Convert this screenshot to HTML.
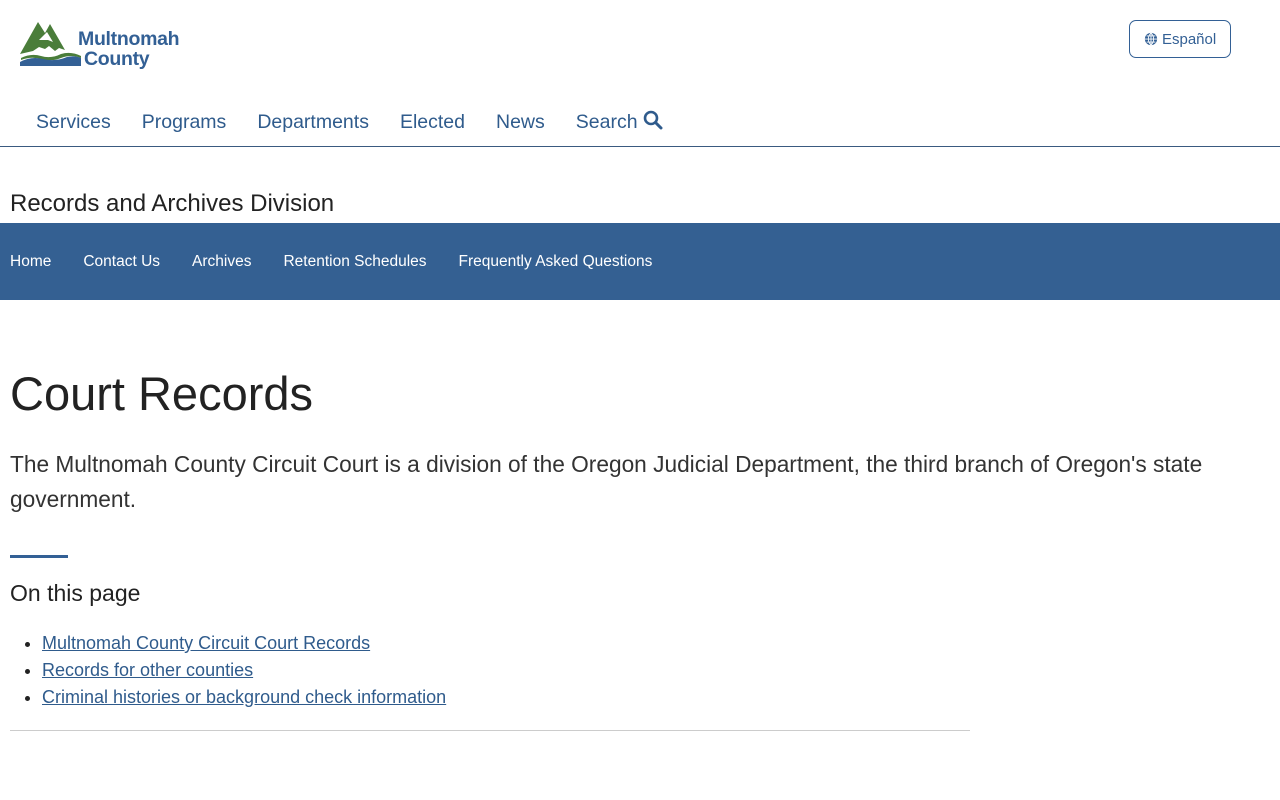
<!DOCTYPE html>
<html><head><meta charset="utf-8"><style>
body{margin:0;font-family:"Liberation Sans",sans-serif;color:#222;background:#fff;width:1280px;height:800px;overflow:hidden;position:relative}
.abs{position:absolute}
.nav a{color:#2f5b8c;text-decoration:none;font-size:19.5px;margin-right:31px}
.sub a{color:#fff;text-decoration:none;font-size:15.5px;margin-right:32px}
ul a{color:#2f5b8c;text-decoration:underline}
</style></head><body>
<svg class="abs" style="left:19px;top:18px" width="64" height="50" viewBox="0 0 64 50">
<path d="M1 36 L19 4 L26 15 L31 6 L46 32 L40 30 L36 33 L30 28 L26 31 L20 29 L14 33 Z" fill="#4a7d3a"/>
<path d="M20 22 L28 14 L34 24 L29 22 Z" fill="#fff"/>
<path d="M2 40 Q12 35 22 38 Q32 41 42 36 Q52 33 62 38 L62 40 Q52 36 42 40 Q32 44 22 41 Q12 38 2 42 Z" fill="#4a7d3a"/>
<path d="M1 44 Q12 38 24 41 Q36 44 48 39 Q56 37 62 40 L62 48 L1 48 Z" fill="#336095"/>
</svg>
<div class="abs" style="left:78px;top:29px;color:#336095;font-weight:bold;font-size:19.5px;line-height:20px;letter-spacing:-0.3px">Multnomah<br><span style="margin-left:6px">County</span></div>
<div class="abs" style="left:1129px;top:20px;width:100px;height:36px;border:1px solid #336095;border-radius:7px;font-size:15px;color:#336095;line-height:38px;text-align:center">
<svg width="14" height="14" viewBox="0 0 16 16" style="vertical-align:-2px"><circle cx="8" cy="8" r="7" fill="#336095"/><path d="M1 8h14M8 1v14M3 4.5h10M3 11.5h10M8 1c-4 4-4 10 0 14M8 1c4 4 4 10 0 14" stroke="#fff" stroke-width="1" fill="none"/></svg> Español</div>
<div class="abs nav" style="left:36px;top:110px">
<a>Services</a><a>Programs</a><a>Departments</a><a>Elected</a><a>News</a><a>Search <svg width="20" height="20" viewBox="0 0 20 20" style="vertical-align:-2px"><circle cx="8" cy="8" r="6" stroke="#2f5b8c" stroke-width="2.6" fill="none"/><path d="M12.5 12.5l5.5 5.5" stroke="#2f5b8c" stroke-width="3" stroke-linecap="round"/></svg></a></div>
<div class="abs" style="left:0;top:146px;width:1280px;height:1px;background:#3a5a80"></div>
<div class="abs" style="left:10px;top:190px;font-size:24px">Records and Archives Division</div>
<div class="abs sub" style="left:0;top:223px;width:1280px;height:77px;background:#346092;box-sizing:border-box;padding:30px 10px 0">
<a>Home</a><a>Contact Us</a><a>Archives</a><a>Retention Schedules</a><a>Frequently Asked Questions</a></div>
<div class="abs" style="left:10px;top:366px;font-size:47px">Court Records</div>
<div class="abs" style="left:10px;top:447px;width:1240px;font-size:22.7px;line-height:35px;color:#333">The Multnomah County Circuit Court is a division of the Oregon Judicial Department, the third branch of Oregon's state government.</div>
<div class="abs" style="left:10px;top:555px;width:58px;height:3px;background:#336095"></div>
<div class="abs" style="left:10px;top:580px;font-size:23px">On this page</div>
<ul class="abs" style="left:10px;top:630px;margin:0;padding-left:32px;font-size:18px;line-height:27px">
<li><a>Multnomah County Circuit Court Records</a></li>
<li><a>Records for other counties</a></li>
<li><a>Criminal histories or background check information</a></li></ul>
<div class="abs" style="left:10px;top:730px;width:960px;height:1px;background:#ccc"></div>
</body></html>
